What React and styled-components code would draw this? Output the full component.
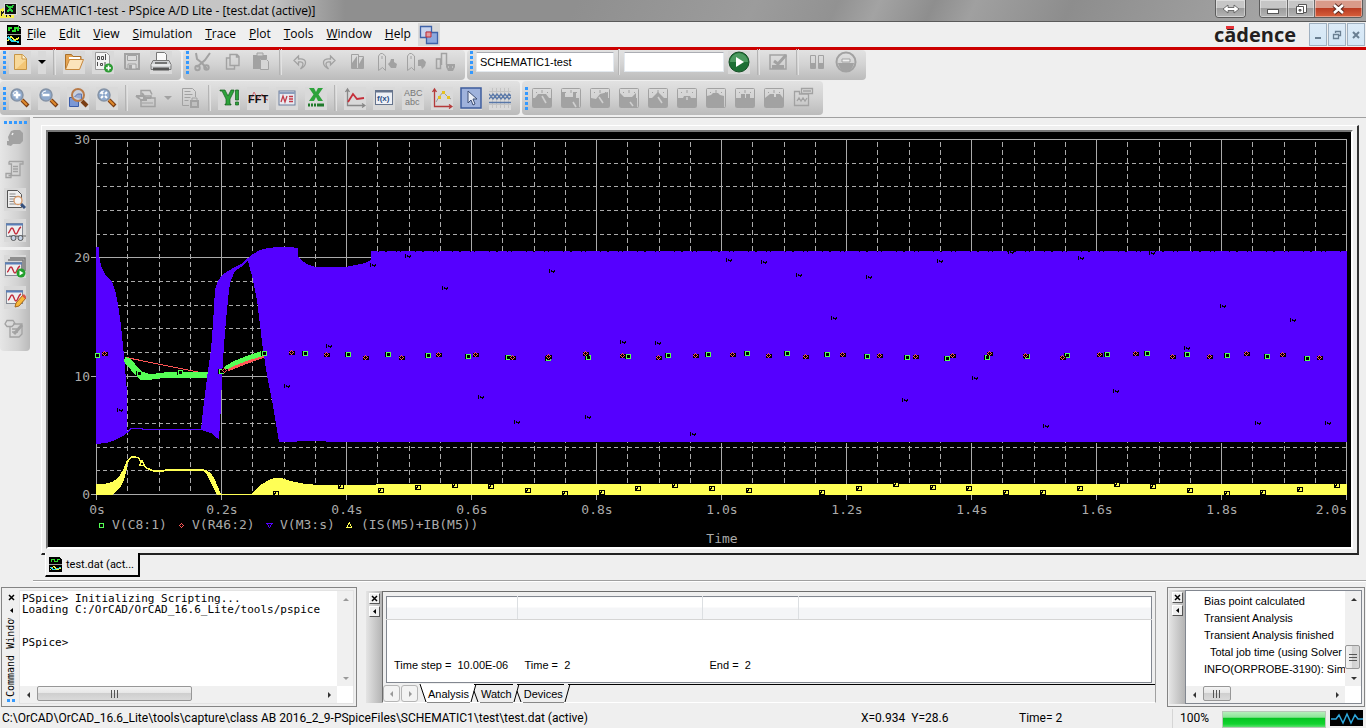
import styled, { createGlobalStyle } from 'styled-components';

const GlobalStyle = createGlobalStyle`
  * { box-sizing: border-box; }
  body { margin: 0; background: #efefef; }
  button, input, textarea { font: inherit; color: inherit; }
`;

const sans = '"Liberation Sans", Arial, sans-serif';
const ui = '"Open Sans", "Noto Sans", sans-serif';
const compact = 'Roboto, "Open Sans", sans-serif';
const mono = '"DejaVu Sans Mono", monospace';

const Page = styled.div`
  min-height: 100vh;
  display: flex;
  flex-direction: column;
  background: #efefef;
  color: #000;
  font-family: ${ui};
  font-size: 12px;
  overflow: hidden;
`;

/* ---------- title bar and menu ---------- */

const TitleBar = styled.header`
  height: 22px;
  display: flex;
  align-items: flex-start;
  padding-right: 3px;
  border-bottom: 1px solid #5a5a5a;
  background:
    linear-gradient(90deg, #c9c9c9 0, #c4c4c4 270px, rgba(160, 160, 160, 0) 345px),
    linear-gradient(115deg, #8f8f8f 0 42%, #9c9c9c 55%, #929292 61%, #a3a3a3 64%, #8e8e8e 68%, #a0a0a0 71%, #8d8d8d 78%, #a3a3a3 92%);
`;

const Title = styled.h1`
  flex: 1;
  margin: 0 0 0 4px;
  font-size: 12px;
  line-height: 21px;
  font-weight: 400;
  white-space: nowrap;
`;

const WindowButtons = styled.div`
  display: flex;
  height: 18px;
  margin-left: ${({ $gap }) => $gap || 0}px;
  border: 1px solid #5d5d5d;
  border-top: 0;
  border-radius: 0 0 4px 4px;
  overflow: hidden;
`;

const WindowButton = styled.button`
  width: ${({ $width }) => $width}px;
  padding: 0;
  border: 0;
  border-right: 1px solid #6a6a6a;
  display: flex;
  align-items: center;
  justify-content: center;
  box-shadow: inset 0 0 0 1px rgba(255, 255, 255, 0.4);
  background: ${({ $close }) =>
    $close
      ? 'linear-gradient(#d99a8a 0 45%, #b83a22 46%, #d8603c)'
      : 'linear-gradient(#c6c6c6 0 45%, #9b9b9b 46%, #b4b4b4)'};
  &:last-child { border-right: 0; }
`;

const MenuBar = styled.nav`
  height: 28px;
  display: flex;
  align-items: center;
  border-bottom: 3px solid #cc0000;
  padding: 0 1px 0 7px;
`;

const MenuItem = styled.button`
  padding: 0 7px 1px 6px;
  border: 0;
  background: none;
  line-height: 20px;
  &::first-letter { text-decoration: underline; }
`;

const IconButton = styled.button`
  width: 22px;
  height: 23px;
  padding: 0;
  border: 0;
  flex: none;
  display: flex;
  align-items: center;
  justify-content: center;
  background: ${({ $flat }) => ($flat ? 'transparent' : '#d9d9d9')};
`;

const NarrowButton = styled(IconButton)`
  width: 8px;
`;

const Brand = styled.span`
  margin-left: auto;
  margin-right: 13px;
  font-size: 20px;
  line-height: 22px;
  font-weight: 700;
  color: #231f20;
`;

const Macron = styled.span`
  position: relative;
  &::before {
    content: '';
    position: absolute;
    left: 2px;
    top: 5px;
    width: 8px;
    height: 3px;
    background: #e53238;
  }
`;

const ChildButtons = styled.div`
  display: flex;
  gap: 1px;
`;

const ChildButton = styled.button`
  width: 18px;
  height: 23px;
  padding: 0;
  display: flex;
  align-items: center;
  justify-content: center;
  border: 1px solid #9fb0c0;
  background: linear-gradient(#dcebf8, #d3e6f5);
`;

/* ---------- toolbars ---------- */

const ToolbarRow = styled.div`
  display: flex;
  gap: 2px;
  margin-bottom: 1px;
`;

const Group = styled.div`
  display: flex;
  align-items: center;
  gap: 3px;
  height: ${({ $tall }) => ($tall ? 34 : 30)}px;
  padding: 0 9px ${({ $tall }) => ($tall ? 0 : 6)}px 3px;
  border-radius: 4px;
  background: linear-gradient(#e2e2e2, #d2d2d2 50%, #bbbbbb);
`;

const Grip = styled.span`
  flex: none;
  width: 3px;
  height: 23px;
  background: repeating-linear-gradient(#3399ff 0 3px, transparent 3px 5px);
`;

const Tools = styled.div`
  display: flex;
  align-items: center;
  gap: ${({ $gap }) => $gap || 7}px;
`;

const Sep = styled.span`
  width: ${({ $thin }) => ($thin ? 2 : 3)}px;
  height: 26px;
  border-left: 1px solid #b4b4b4;
  border-right: 1px solid #e2e2e2;
`;

const Field = styled.input`
  width: ${({ $width }) => $width}px;
  height: 20px;
  padding: 0 3px;
  border: 1px solid #e3e9ef;
  border-top-color: #abadb3;
  background: #fff;
  font-family: ${sans};
  font-size: 11px;
`;

/* ---------- workspace ---------- */

const Workspace = styled.main`
  flex: 1;
  display: flex;
  align-items: flex-start;
  gap: 3px;
  padding-top: 1px;
`;

const SideBar = styled.aside`
  flex: none;
  width: 30px;
  height: 234px;
  display: flex;
  flex-direction: column;
  align-items: center;
  gap: 8px;
  padding-top: 4px;
  border-radius: 0 0 4px 4px;
  background: linear-gradient(90deg, #e6e6e6, #d2d2d2 60%, #bababa);
`;

const SideGrip = styled.span`
  flex: none;
  width: 23px;
  height: 3px;
  margin-bottom: -6px;
  background: repeating-linear-gradient(90deg, #3399ff 0 3px, transparent 3px 5px);
`;

const SideSep = styled.span`
  flex: none;
  width: 30px;
  height: 3px;
  margin: -3px 0;
  background: #efefef;
`;

const Document = styled.section`
  flex: 1;
  min-width: 0;
  border-top: 1px solid #a0a0a0;
  border-bottom: 1px solid #a0a0a0;
  box-shadow: 0 1px #fff;
  padding: 7px 7px 3px 8px;
`;

const Frame = styled.div`
  padding: 4px;
  border: solid;
  border-width: 1px 2px 2px 1px;
  border-color: #fff #333 #222 #fff;
`;

const PlotBox = styled.div`
  border: 2px solid;
  border-color: #777 #fff #fff #777;
  background: #000;
  svg { display: block; width: 100%; height: auto; }
`;

const DocTab = styled.button`
  position: relative;
  display: flex;
  align-items: center;
  gap: 4px;
  height: 24px;
  margin: -2px 0 0 4px;
  padding: 0 4px 0 3px;
  border: solid #000;
  border-width: 0 2px 2px 0;
  border-left: 1px solid #fff;
  background: #efefef;
  font-family: ${compact};
  font-size: 11px;
`;

/* ---------- bottom docks ---------- */

const Docks = styled.div`
  display: flex;
  align-items: center;
  gap: 9px;
  padding: 5px 1px 1px;
  height: 126px;
`;

const Dock = styled.section`
  display: flex;
  height: 120px;
  min-width: 0;
  flex: 0 1 ${({ $width }) => $width}px;
  border: 1px solid #848484;
  padding: 2px 2px 2px 1px;
`;

const Console = styled.div`
  flex: 1;
  min-width: 0;
  display: grid;
  grid-template-columns: 1fr 16px;
  grid-template-rows: 1fr 17px;
  border: 1px solid ${({ $dark }) => ($dark ? '#828790' : '#e3e3e3')};
  background: #fff;
`;

const ConsoleText = styled.textarea`
  width: 100%;
  height: 100%;
  padding: 2px 0 0 2px;
  border: 0;
  resize: none;
  overflow: hidden;
  white-space: pre;
  background: #fff;
  font-family: ${mono};
  font-size: 11px;
  line-height: 11px;
`;

const DockStrip = styled.div`
  flex: none;
  width: 16px;
  display: flex;
  flex-direction: column;
  align-items: center;
  gap: 2px;
  padding-top: 2px;
  background: ${({ $shaded }) => ($shaded ? 'linear-gradient(90deg, #e4e4e4, #b4b4b4)' : 'none')};
`;

const DockButton = styled.button`
  width: 11px;
  height: 11px;
  padding: 0;
  display: flex;
  align-items: center;
  justify-content: center;
  border: 1px solid;
  border-color: ${({ $plain }) => ($plain ? 'transparent' : '#fff #555 #555 #fff')};
  background: ${({ $plain }) => ($plain ? 'none' : '#efefef')};
`;

const StripTitle = styled.span`
  flex: 1;
  min-height: 0;
  overflow: hidden;
  writing-mode: vertical-rl;
  transform: rotate(180deg);
  font-family: ${mono};
  font-size: 10px;
  line-height: 14px;
  white-space: nowrap;
`;

const StripGrip = styled.span`
  width: 8px;
  height: 3px;
  margin-bottom: 2px;
  background: repeating-linear-gradient(90deg, #3399ff 0 3px, transparent 3px 5px);
`;

const ScrollBar = styled.div`
  display: flex;
  flex-direction: ${({ $vertical }) => ($vertical ? 'column' : 'row')};
  background: #f0f0f0;
`;

const ScrollEnd = styled.button`
  flex: none;
  width: 17px;
  height: 17px;
  padding: 0;
  border: 0;
  background: none;
  display: flex;
  align-items: center;
  justify-content: center;
`;

const Track = styled.div`
  flex: 1;
  display: flex;
  flex-direction: inherit;
  justify-content: ${({ $end }) => ($end ? 'flex-end' : 'flex-start')};
`;

const Thumb = styled.span`
  width: ${({ $vertical, $size }) => ($vertical ? '15px' : $size)};
  height: ${({ $vertical, $size }) => ($vertical ? $size : '15px')};
  display: flex;
  align-items: center;
  justify-content: center;
  border: 1px solid #979797;
  border-radius: 2px;
  background: linear-gradient(${({ $vertical }) => ($vertical ? '90deg' : '180deg')}, #f3f3f3, #e6e6e6 48%, #cfcfcf 50%, #dadada);
`;

const Analysis = styled.section`
  flex: 1;
  min-width: 0;
  height: 112px;
  margin-right: 2px;
  display: flex;
`;

const AnalysisBody = styled.div`
  flex: 1;
  min-width: 0;
  display: flex;
  flex-direction: column;
  border: 1px solid;
  border-color: #6d6d6d #a0a0a0 #fff #6d6d6d;
  padding: 4px 3px 0;
`;

const Grid = styled.table`
  width: 100%;
  table-layout: fixed;
  border-collapse: collapse;
  border: 1px solid #828790;
  background: #fff;
  font-family: ${sans};
  font-size: 11px;

  th {
    height: 23px;
    padding: 0;
    border-right: 1px solid #dcdfe2;
    border-bottom: 1px solid #d5d5d5;
    background: linear-gradient(#fff 45%, #f4f5f7 46%);
  }
  th:last-child { border-right: 0; }
  td {
    height: 63px;
    padding: 0 7px 11px;
    vertical-align: bottom;
    white-space: pre;
  }
`;

const SheetTabs = styled.div`
  display: flex;
  height: 19px;
  margin: 1px -3px 0;
  font-family: ${sans};
  font-size: 11px;
`;

const PageButton = styled.button`
  width: 17px;
  height: 17px;
  margin: 1px 1px 0 0;
  padding: 0;
  border: 1px solid #b5b5b5;
  border-radius: 3px;
  background: #f3f3f3;
  display: flex;
  align-items: center;
  justify-content: center;
`;

const SheetTab = styled.button`
  padding: 0 1px;
  border: 0;
  border-top: 1px solid ${({ $active }) => ($active ? '#fff' : '#000')};
  border-bottom: 1px solid #888;
  background: ${({ $active }) => ($active ? '#fff' : '#efefef')};
  line-height: 16px;
`;

const SheetRest = styled.span`
  flex: 1;
  border-top: 1px solid #000;
`;

const Log = styled.ul`
  margin: 0;
  padding: 2px 0 0 18px;
  overflow: hidden;
  list-style: none;
  font-family: ${sans};
  font-size: 11px;
  line-height: 17px;
  white-space: pre;
`;

/* ---------- status bar ---------- */

const StatusBar = styled.footer`
  height: 20px;
  display: grid;
  grid-template-columns: 1fr 158px 153px 48px 110px 33px;
  align-items: center;
  padding: 0 3px 0 2px;
  font-family: ${compact};
  line-height: 19px;
  white-space: pre;
`;

const StatusCell = styled.span`
  padding-left: 7px;
  border-left: 1px solid #d5d5d5;
`;

const Progress = styled.div`
  height: 17px;
  margin: 2px 4px 0 2px;
  border: 1px solid #b8c8b8;
  background: linear-gradient(#b5efbb, #8be596 35%, #05c522 42%, #12d32f 80%, #5ce06f);
`;

/* ---------- icons ---------- */

const G = '#a2a2a2';

const Svg = ({ w = 22, h = 22, children, ...rest }) => (
  <svg width={w} height={h} viewBox={`0 0 ${w} ${h}`} fill="none" aria-hidden="true" {...rest}>
    {children}
  </svg>
);

const Lens = ({ children }) => (
  <>
    <path d="M13 13l6 6" stroke="#7a3d12" strokeWidth="4" />
    <path d="M13 13l5 5" stroke="#e08a2c" strokeWidth="2" />
    <circle cx="8" cy="8" r="6" fill="#8fa9cc" stroke="#8593a6" strokeWidth="1.5" />
    <path d="M4 7a4 4 0 0 1 4-3" stroke="#fff" />
    {children}
  </>
);

const Wave = ({ children }) => (
  <>
    <rect x="2.5" y="3.5" width="16" height="13" fill="#eee" stroke="#848a94" />
    <path d="M2 4.5h17" stroke="#5a7fb8" strokeWidth="2" />
    <path d="M4 13c2 0 2-5 4-5s2 6 4 6 2-6 5-7" stroke="#c22a3a" strokeWidth="1.4" />
    {children}
  </>
);

const Meter = ({ top, needle }) => (
  <>
    <rect x="1.5" y="1.5" width="19" height="19" rx="1" stroke={G} />
    <path d={`M2 11${top}V20H2z`} fill={G} />
    <path d={needle} stroke="#d0d0d0" strokeWidth="1.6" />
    <path d="M11 3v3M5 5l1 1M17 5l-1 1" stroke={G} />
  </>
);

const icons = {
  fresh: (
    <>
      <path d="M5.500 3.500h8l4 4v11h-12z" fill="#f8d99a" stroke="#c79545" />
      <path d="M13 3.500v4.500h4.500" fill="#fff3d4" stroke="#c79545" />
      <path d="M7 18h10V9z" fill="#f3c676" />
    </>
  ),
  open: (
    <>
      <path d="M2.500 18V3.500h6l1.500 2h8V9" fill="#e6a552" stroke="#a86f2d" />
      <path d="M2.500 18.500L6.500 8.500h14l-4 10z" fill="#fbe3bb" stroke="#c7873b" />
      <path d="M6 7h11" stroke="#fff" strokeWidth="2" />
    </>
  ),
  addSim: (
    <>
      <path d="M3.500 1.500h11l3 3v14h-14z" fill="#f3f3f3" stroke="#999" />
      <path d="M5.500 5.500h2v3h-2zM9.500 5.500h2v3h-2zM13.500 3v6M5.500 11v4M8.500 12.500h2v2h-2zM13 11v4" stroke="#4c4c4c" />
      <circle cx="16.500" cy="17" r="4.500" fill="#2e9b35" />
      <path d="M16.500 14.500v5M14 17h5" stroke="#fff" strokeWidth="1.500" />
    </>
  ),
  save: (
    <>
      <path d="M4 3h14v15H5l-1-1z" stroke={G} strokeWidth="2" />
      <path d="M6.500 4.500h9v5h-9z" fill="#dcdcdc" stroke={G} />
      <path d="M7 13h8v5H7z" fill="#dcdcdc" stroke={G} />
      <path d="M8 14h3v4H8z" fill={G} />
    </>
  ),
  print: (
    <>
      <path d="M6.500 10V1.500h8l2 2V10" fill="#fafafa" stroke="#777" />
      <path d="M3 9.500h16l2 4v5H1v-5z" fill="#cfd1d3" stroke="#777" />
      <path d="M1.500 14h19" stroke="#fff" />
      <path d="M3 18h16" stroke="#555" strokeWidth="3" />
      <path d="M5 12h12" stroke="#555" strokeWidth="1.500" />
    </>
  ),
  cut: (
    <>
      <path d="M4 2l1 6 5 4 5 6M18 2l-5 7-8 7" stroke={G} strokeWidth="2" />
      <circle cx="5.500" cy="17" r="2.200" stroke={G} strokeWidth="2" />
      <circle cx="14.500" cy="16.500" r="2.200" stroke={G} strokeWidth="2" />
    </>
  ),
  copy: <path d="M9 3.500h7l2 2v9H9zM9 7H5.500v11h8v-3.500M15.500 3.500V6H18" stroke={G} strokeWidth="1.400" />,
  paste: (
    <>
      <path d="M3 4h14v4h-7v10H3z" fill={G} />
      <path d="M7 2h6v3H7z" stroke={G} fill="#d5d5d5" />
      <path d="M10.500 8.500h6l2 2v8h-8z" fill="#d5d5d5" stroke={G} />
    </>
  ),
  undo: <path d="M9.500 5L5 9.500 9.500 14v-3c5-1 6 2 2 7 7-4 7-11-2-10z" stroke={G} strokeWidth="1.300" />,
  redo: <path d="M12.500 5l4.500 4.500-4.500 4.500v-3c-5-1-6 2-2 7-7-4-7-11 2-10z" stroke={G} strokeWidth="1.300" />,
  book: (
    <>
      <path d="M4.500 3.500h7v14h-7zM11.500 5.500h5v12h-5z" stroke={G} />
      <path d="M5 12l5-7v12H5zM12 13l4-7v11h-4z" fill={G} />
    </>
  ),
  markNext: (
    <>
      <path d="M2.500 19.500V5l2-2.500h2L9.500 5v14.500l-3-3zM6 5v3" stroke={G} />
      <path d="M15 8h3v3l3 2-1 4h-5l-3-4 2-2z" fill={G} />
    </>
  ),
  markPrev: (
    <>
      <path d="M2.500 19.500V5l2-2.500h2L9.500 5v14.500l-3-3zM6 5v3" stroke={G} />
      <path d="M13 9l5-1 3 3-1 4-3 3-1-3h-3z" fill={G} />
    </>
  ),
  markClear: (
    <>
      <path d="M2.500 17.500V8h4v9.500zM7.500 14V2.500h5V14" stroke={G} strokeWidth="1.500" />
      <path d="M12 13h9v3l-2 4h-5l-2-4z" fill={G} />
      <path d="M14 16h1M18 16h1" stroke="#ddd" />
    </>
  ),
  run: (
    <>
      <circle cx="11" cy="11" r="10" fill="#1d6f35" stroke="#175026" />
      <path d="M2 11a9 9 0 0 1 18 0z" fill="#4c9a60" />
      <path d="M8 6l8 5-8 5z" fill="#fff" />
    </>
  ),
  edit: (
    <>
      <path d="M3 4h16v14H3z" stroke={G} strokeWidth="1.500" />
      <path d="M5 14h12v4H5z" fill={G} />
      <path d="M7 10l4 3 8-9" stroke={G} strokeWidth="3" />
    </>
  ),
  pause: (
    <>
      <path d="M4.500 4.500h5v13h-5zM12.500 4.500h5v13h-5z" stroke={G} />
      <path d="M5 12h4v5H5zM13 12h4v5h-4z" fill={G} />
    </>
  ),
  stop: (
    <>
      <circle cx="11" cy="11" r="9.500" stroke={G} strokeWidth="2" />
      <path d="M3 12h16c-1 5-4 8-8 8s-7-3-8-8z" fill={G} />
      <path d="M7 8h8v3H7z" stroke={G} fill="#eee" />
    </>
  ),
  zoomIn: <Lens><path d="M8 4.500v7M4.500 8h7" stroke="#fff" strokeWidth="2.500" /></Lens>,
  zoomOut: <Lens><path d="M4.500 8h7" stroke="#fff" strokeWidth="2.500" /></Lens>,
  zoomArea: (
    <>
      <path d="M2.500 10.500h9v9h-9z" fill="#7a98d6" stroke="#3a5ca8" />
      <path d="M15 14l5 5" stroke="#7a3d12" strokeWidth="4" />
      <circle cx="11" cy="8" r="6" fill="#c8cfdd" stroke="#b87a48" strokeWidth="2" />
      <path d="M7.500 10l3-3h4v5" fill="#98a9cf" stroke="#5b74af" />
    </>
  ),
  zoomFit: <Lens><path d="M5 5l2 2M11 5L9 7M5 11l2-2M11 11L9 9" stroke="#fff" strokeWidth="2" /></Lens>,
  axis: (
    <>
      <path d="M6 8V3.500h9l2 4M6 14v5.500h14V11h-4V9H10" stroke={G} strokeWidth="1.500" />
      <path d="M1 9h8L7 6M8 11h8M5 13h7M1 9l4 3" stroke={G} strokeWidth="2" />
      <path d="M7 16h11" stroke={G} />
    </>
  ),
  report: (
    <>
      <path d="M10 18.500H3.500V1.500h10l3 3V10M5.500 4.500h6M5.500 7.500h8M5.500 10.500h6M5.500 13.500h4" stroke={G} />
      <path d="M11 13h9v8h-9z" fill={G} />
      <path d="M13 13v-2h5v2" stroke={G} />
      <path d="M13 16h5M13 18h5" stroke="#ddd" />
    </>
  ),
  why: (
    <>
      <path d="M2 3h5l3 6 3-6h3v1l-4 8v5h1v1H7v-1h1v-5L4 4H2z" fill="#2da33b" stroke="#145e1e" strokeWidth=".7" />
      <path d="M17.500 3h3v10h-3zM17.500 15h3v3h-3z" fill="#2da33b" stroke="#145e1e" strokeWidth=".7" />
    </>
  ),
  fft: (
    <>
      <path d="M1 14l3-2 3-7 4 7 4-5 3 5 3 1" stroke="#d26a72" />
      <text x="1" y="16" fontSize="11" fontWeight="700" fill="#111" fontFamily="Liberation Sans, sans-serif">FFT</text>
    </>
  ),
  netlist: (
    <>
      <rect x="3" y="4" width="16" height="14" fill="#e9eaf0" stroke="#6c7f9e" />
      <path d="M3 6h16" stroke="#8b9dbb" strokeWidth="2" />
      <path d="M5 15l2-6 2 6 2-6M13 9.500h4M13 12h4M13 14.500h4" stroke="#c23a48" strokeWidth="1.300" />
    </>
  ),
  excel: (
    <>
      <path d="M4 1h5l2 4 2-4h5l-4.500 6.500L18 14h-5l-2-4-2 4H4l4.500-6.500z" fill="#2da33b" />
      <path d="M3 18h2M6 18h2M9 18h2M12 18h7" stroke="#1f7a2b" strokeWidth="3" />
    </>
  ),
  trace: (
    <>
      <path d="M3.500 2v16.500H21M1.500 5l2-3 2 3M18 16.500l3 2-3 2" stroke="#888" strokeWidth="1.300" />
      <path d="M4 15l5-8 4 5 7-1" stroke="#c52f3a" strokeWidth="1.800" />
    </>
  ),
  func: (
    <>
      <rect x="2.500" y="3.500" width="17" height="14" fill="#eef0f5" stroke="#66748c" />
      <path d="M3 4.500h16" stroke="#66748c" strokeWidth="2" />
      <text x="4" y="14" fontSize="8" fontWeight="700" fill="#2b4f88" fontFamily="Liberation Sans, sans-serif">f(x)</text>
    </>
  ),
  label: (
    <g fontSize="9" fill="#777" stroke="none" fontFamily="Liberation Sans, sans-serif">
      <text x="2" y="9">ABC</text>
      <text x="3" y="18">abc</text>
    </g>
  ),
  points: (
    <>
      <path d="M3.500 1.500v18H21M1.500 5l2-3 2 3M18 17.500l3 2-3 2" stroke="#b53a3a" strokeWidth="1.300" />
      <path d="M5 15l3-5 4-5 5 5 3 2" stroke="#999" />
      <path d="M7 9h3v3H7zM11 4h3v3h-3zM16 9h3v3h-3z" fill="#e6c11e" />
    </>
  ),
  cursor: (
    <>
      <rect x="1" y="1" width="20" height="20" fill="#9fb2dc" stroke="#3e5c9c" strokeWidth="1.500" />
      <path d="M8 4v12l3-3 2 5 2-1-2-5h4z" fill="#e9edf6" stroke="#3d4e74" />
    </>
  ),
  lattice: (
    <>
      <path d="M3.500 1v20M7.500 1v20M11.500 1v20M15.500 1v20M19.500 1v20M0 4.500h22M0 17.500h22" stroke="#c3c3c3" />
      <path d="M0 7l4 5 4-5 4 5 4-5 4 5 2-2M0 12l4-5 4 5 4-5 4 5 4-5 2 2M0 15.500h22" stroke="#5877a8" strokeWidth="1.300" />
    </>
  ),
  m1: <Meter top="h2l3-4h8l3 4h2" needle="M11 9l4 7" />,
  m2: <Meter top="V5h3v5h8V5h3v6h3" needle="M13 15l3 5" />,
  m3: <Meter top="l5 1 4-5 8-2v6h1" needle="M10 10l4 6" />,
  m4: <Meter top="V6l4 4h8l4-4v5h1" needle="M12 15l3 4" />,
  m5: <Meter top="h3l4-4 2-2 2 2 4 4h3" needle="M11 10l4 6" />,
  m6: <Meter top="h5l1-2h6l1 2h5" needle="M11 10v3" />,
  m7: <Meter top="V9l4-1 2-2h5l2 2 4 1v2" needle="M0 0" />,
  m8: <Meter top="h5V7h4v4h1V7h4v4h4" needle="M0 0" />,
  m9: <Meter top="l5-4h4v3h2V7h4l3 4" needle="M0 0" />,
  m10: (
    <path d="M2.500 7V4.500h5V7h9v11.500h-14zM9.500 1.500h11v5h-11zM11 4h8M5 14l2-3 2 3 2-3 2 3 2-3" stroke={G} strokeWidth="1.300" />
  ),
  blob: (
    <>
      <path d="M7 4l3-1h6l3 3v8l-3 3H9l-2 2-4-1v-4h2l-1-4z" fill={G} />
      <path d="M8 8l1-2" stroke="#eee" strokeWidth="1.500" />
    </>
  ),
  scroll: <path d="M5 3.500h14V6h-3v11.500H4.500M7.500 17V6H5V3.500M2 15.500h5v4H2zM9 8.500h5M9 11h5M9 13.500h5" stroke={G} strokeWidth="1.300" />,
  docFind: (
    <>
      <path d="M3.500 1.500h10l4 4v13h-14z" fill="#eee" stroke="#555" />
      <path d="M5.500 5h6M5.500 7.500h8M5.500 10h6M5.500 12.500h6M5.500 15h7" stroke="#888" />
      <path d="M17 15l4 4" stroke="#35507e" strokeWidth="3" />
      <circle cx="14" cy="11.500" r="4" fill="#f4f4f4" stroke="#d79a6a" strokeWidth="1.300" />
    </>
  ),
  waveView: (
    <Wave>
      <path d="M5 16h17" stroke="#666" />
      <circle cx="9.500" cy="18" r="2.500" fill="#c5d3e6" stroke="#555" />
      <circle cx="16.500" cy="18" r="2.500" fill="#c5d3e6" stroke="#555" />
    </Wave>
  ),
  waveRun: (
    <>
      <path d="M6 2h15v13M4 4h15v12" stroke="#777" strokeWidth="1.500" />
      <g transform="translate(-1 3)"><Wave /></g>
      <circle cx="17" cy="17" r="4.500" fill="#22a02c" />
      <path d="M15.500 14.500l4 2.500-4 2.500z" fill="#fff" />
    </>
  ),
  waveEdit: (
    <Wave>
      <path d="M11 20l1-4 7-8 3 3-7 8z" fill="#f8b93a" stroke="#a5661a" />
      <path d="M19 8l3 3" stroke="#d9554a" strokeWidth="2.500" />
    </Wave>
  ),
  notes: (
    <>
      <path d="M6 9v10h9l3-3V6H9M3 2.500h6l2 3-3 3H3L1 6zM8 11h5M8 14h6" stroke={G} strokeWidth="1.300" />
      <path d="M10 16l8-9" stroke={G} strokeWidth="3" />
    </>
  ),
};

const Tool = ({ name, label, flat }) => (
  <IconButton type="button" aria-label={label || name} $flat={flat}>
    <Svg>{icons[name]}</Svg>
  </IconButton>
);

const PlotFileIcon = () => (
  <Svg w={14} h={20} shapeRendering="crispEdges">
    <path d="M0 0h11l3 3v17H0z" fill="#000" />
    <path d="M11 0v3h3" stroke="#888" />
    <path d="M2 6V3h3M5 6h3V3h3v3" stroke="#2be02b" strokeWidth="1.500" />
    <path d="M0 9.500h14" stroke="#999" />
    <path d="M1 16l3-4 4 3 4-2" stroke="#f4f13a" strokeWidth="1.500" />
    <path d="M1 12l4 4 7 1" stroke="#2ad7e8" strokeWidth="1.500" />
  </Svg>
);

const arrows = {
  up: 'M1 5l3-3 3 3z',
  down: 'M1 3l3 3 3-3z',
  left: 'M5 1L2 4l3 3z',
  right: 'M3 1l3 3-3 3z',
};

const Arrow = ({ dir, color = '#333' }) => (
  <Svg w={8} h={8}><path d={arrows[dir]} fill={color} /></Svg>
);

/* ---------- plot ---------- */

const LEFT = 96;
const RIGHT = 1346;
const blue = '#5500ff';
const green = '#55ff55';
const red = '#ff5555';
const yellow = '#ffff55';
const ink = '#aaaaaa';

const minorY = [163, 186, 210, 234, 281, 305, 328, 352, 399, 423, 447, 470];
const majorY = [[139, '30'], [257, '20'], [376, '10'], [494, '0']];
const majorX = Array.from({ length: 11 }, (_, i) => LEFT + i * 125);
const minorX = majorX.slice(0, 10).flatMap((x) => [x + 31, x + 63, x + 94]);

const squares = [
  [97, 355], [139, 373], [180, 372], [221, 371], [264, 353], [305, 353], [348, 354], [388, 354],
  [428, 355], [468, 356], [508, 357], [548, 358], [588, 357], [628, 356], [668, 355], [708, 354],
  [747, 353], [787, 353], [827, 354], [867, 356], [907, 357], [947, 358], [987, 357], [1027, 356],
  [1067, 355], [1107, 354], [1147, 353], [1187, 354], [1227, 355], [1267, 356], [1307, 358],
];

const diamonds = [
  [104, 353], [224, 370], [291, 352], [326, 354], [365, 357], [401, 357], [438, 354], [475, 354],
  [512, 357], [548, 356], [585, 353], [622, 355], [658, 357], [695, 355], [732, 354], [768, 355],
  [805, 356], [842, 354], [879, 355], [915, 356], [952, 355], [989, 353], [1025, 355], [1062, 357],
  [1099, 354], [1135, 353], [1172, 356], [1209, 356], [1246, 353], [1282, 354], [1319, 357],
];

const blueMarks = [
  [120, 410], [329, 346], [287, 386], [481, 397], [373, 265], [408, 256], [445, 288], [552, 271],
  [623, 342], [658, 343], [517, 422], [588, 417], [693, 434], [729, 260], [764, 262], [799, 275],
  [834, 318], [869, 277], [940, 261], [1011, 252], [1081, 258], [1152, 253], [1223, 306],
  [1293, 320], [1187, 348], [975, 378], [905, 400], [1116, 391], [1046, 426], [1258, 423], [1328, 423],
];

const yellowMarks = [
  [276, 493], [341, 486], [381, 490], [418, 487], [455, 485], [491, 486], [528, 490], [565, 493],
  [602, 492], [638, 488], [675, 485], [712, 488], [749, 490], [822, 492], [859, 488], [896, 484],
  [933, 487], [969, 488], [1006, 492], [1043, 492], [1080, 488], [1117, 484], [1153, 486],
  [1190, 490], [1227, 493], [1263, 492], [1300, 489], [1337, 485],
];

const Square = ({ x, y }) => (
  <>
    <path d={`M${x - 3} ${y - 2}h6v5h-6z`} fill="#000" />
    <rect x={x - 1.5} y={y - 1.5} width="4" height="4" fill="#000" stroke={green} />
  </>
);

const Diamond = ({ x, y }) => (
  <>
    <rect x={x - 2} y={y - 1} width="6" height="4" fill="#000" />
    <path
      d={`M${x} ${y - 2}h1v1h-1zM${x - 1} ${y - 1}h1v1h-1zM${x + 1} ${y - 1}h1v1h-1zM${x - 2} ${y}h1v1h-1zM${x + 2} ${y}h1v1h-1zM${x - 1} ${y + 1}h1v1h-1zM${x + 1} ${y + 1}h1v1h-1zM${x} ${y + 2}h1v1h-1z`}
      fill={red}
    />
  </>
);

const Plot = () => (
  <svg viewBox="48 132 1303 415" role="img" aria-label="Transient plot" shapeRendering="crispEdges">
    <g stroke={ink}>
      {minorY.map((y) => (
        <path key={y} d={`M${LEFT} ${y + 0.5}H${RIGHT}`} strokeDasharray="4 3" />
      ))}
      {minorX.map((x) => (
        <path key={x} d={`M${x + 0.5} 142V494`} strokeDasharray="5 3" />
      ))}
      {majorY.map(([y]) => (
        <path key={y} d={`M91 ${y + 0.5}H${RIGHT}`} />
      ))}
      {majorX.map((x) => (
        <path key={x} d={`M${x + 0.5} 139V500`} />
      ))}
    </g>

    <g fill={red} stroke={red}>
      <path d="M126 357.500L208 374" fill="none" />
      <path d="M225 371L245 363 264 356" fill="none" strokeWidth="3" />
    </g>
    <path d="M125 357l4 1 6 6 6 7 8 3 13-1 4-1h42v6h-46l-14 2h-7l-5-4-5-6-7-8z" fill={green} />
    <path d="M224 367l10-6 15-6 13-4h2v5l-15 4-15 6-8 4z" fill={green} />

    <g fill={blue}>
      <path d="M96 247h3v8l2 11 4 8 7 8 3 8 3 14 3 22 3 30 3 36v41l-4 3-8 4-9 3-10 1z" />
      <path
        d="M201 430L203 410 207 378 211 350 213 323 215 290 217 283 221 276 228 271 235 267 241 264 248 258 253 254
           260 250 268 248 277 247H290L298 248V257L304 262 309 265 316 267H346L355 265 365 263 371 260V251H1347V442
           H346L306 441 288 442H279L277 430 272 400 267 375 263 350 257 300 253 280 248 261 241 267 235 271 231 280
           229 290 226 320 224 345 222 376 221 405 219 440 217 438 211 433z"
      />
    </g>
    <path d="M127 432.500l4-4h10l3 1h58" fill="none" stroke={blue} />
    <path d="M376 442.500H1346" stroke="#000" strokeDasharray="1 4" />
    <path d="M378 251.500H1346" stroke="#000" strokeDasharray="1 6 2 9 1 3 1 14" />

    <g fill={yellow}>
      <path d="M96 484h8l8-2 6-4 5-8 4-10v8l-3 12-4 8-8 7H96z" />
      <path d="M202 470h4l5 3 4 7 6 14v1h-4l-6-12-4-8z" />
      <path d="M251 495l8-9 8-5 7-3h7l9 3 15 3 15 1h56v-1h971v11z" />
      <path d="M218 494h36v1h-36z" />
    </g>
    <path
      d="M126.500 464l2-4 3-3h4l3 1 3 5 5 5 7 3h10l2-1h38"
      fill="none"
      stroke={yellow}
      strokeWidth="1.500"
    />

    {squares.map(([x, y]) => <Square key={x} x={x} y={y} />)}
    {diamonds.map(([x, y]) => <Diamond key={x} x={x} y={y} />)}
    {blueMarks.map(([x, y]) => (
      <path key={x} d={`M${x - 3} ${y - 2}h1v4h-1zM${x - 1} ${y - 1}h1v1h2v2h-1v-1h-2zM${x + 2} ${y - 1}h1v2h-1z`} fill="#000" />
    ))}
    {yellowMarks.map(([x, y]) => (
      <g key={x}>
        <path d={`M${x - 3} ${y - 2}h6v5h-6z`} fill="#000" />
        <path d={`M${x - 2} ${y - 1}h1v1h-1zM${x - 1} ${y + 1}h1v-2h1v3h-2zM${x + 1} ${y - 1}h1v3h-1z`} fill={yellow} />
      </g>
    ))}
    <path d="M142 460.500l2.500 5h-5z" fill="#000" stroke={yellow} />

    <g fill={ink} fontFamily={mono} fontSize="13">
      {majorY.map(([y, text]) => (
        <text key={y} x="90" y={y + 5} textAnchor="end">{text}</text>
      ))}
      {majorX.map((x, i) => (
        <text key={x} x={x + 1} y="514" textAnchor={i === 10 ? 'end' : 'middle'}>
          {i === 0 ? '0s' : `${(i * 0.2).toFixed(1)}s`}
        </text>
      ))}
      <text x="112" y="529">V(C8:1)</text>
      <text x="192" y="529">V(R46:2)</text>
      <text x="280" y="529">V(M3:s)</text>
      <text x="361" y="529">(IS(M5)+IB(M5))</text>
      <text x="722" y="543" textAnchor="middle">Time</text>
    </g>
    <Square x={101} y={525} />
    <Diamond x={181} y={525} />
    <path d="M267 523.500h5l-2.500 4z" fill="none" stroke={blue} />
    <path d="M349.500 522.500l2 5h-5z" fill="none" stroke={yellow} />
  </svg>
);

const menu = ['File', 'Edit', 'View', 'Simulation', 'Trace', 'Plot', 'Tools', 'Window', 'Help'];
const meters = ['m1', 'm2', 'm3', 'm4', 'm5', 'm6', 'm7', 'm8', 'm9', 'm10'];

const DockControls = ({ plain }) => (
  <>
    <DockButton type="button" aria-label="Close panel" $plain={plain}>
      <Svg w={7} h={7}><path d="M1 1l5 5M6 1L1 6" stroke="#000" strokeWidth="1.500" /></Svg>
    </DockButton>
    <DockButton type="button" aria-label="Collapse panel" $plain={plain}>
      <Svg w={7} h={7}><path d="M5 1v5L2 3.500z" fill="#000" /></Svg>
    </DockButton>
  </>
);

const Bar = ({ vertical, size, end }) => (
  <ScrollBar $vertical={vertical}>
    <ScrollEnd type="button" aria-label={vertical ? 'Scroll up' : 'Scroll left'}>
      <Arrow dir={vertical ? 'up' : 'left'} color={size ? '#333' : '#999'} />
    </ScrollEnd>
    <Track $end={end}>
      {size && (
        <Thumb $vertical={vertical} $size={size}>
          <Svg w={8} h={8}>
            <path d={vertical ? 'M0 1.500h8M0 4.500h8M0 7.500h8' : 'M.5 0v8M3.500 0v8M6.500 0v8'} stroke="#555" />
          </Svg>
        </Thumb>
      )}
    </Track>
    <ScrollEnd type="button" aria-label={vertical ? 'Scroll down' : 'Scroll right'}>
      <Arrow dir={vertical ? 'down' : 'right'} color={size ? '#333' : '#999'} />
    </ScrollEnd>
  </ScrollBar>
);

const Slash = ({ left, right, cross }) => (
  <Svg w={right ? 8 : 10} h={19}>
    <path d="M0 0h10v18H0z" fill="#efefef" />
    {left && <path d="M0 0h6L1 18H0z" fill="#fff" />}
    {right && <path d="M1 0h7v18z" fill="#fff" />}
    {!right && <path d="M4 .5h6" stroke="#000" />}
    {right ? <path d="M1 0l6 18" stroke="#000" /> : <path d="M6 0L1 18" stroke="#000" />}
    {cross && <path d="M4 7l4 11" stroke="#000" />}
  </Svg>
);

export default function App() {
  return (
    <Page>
      <GlobalStyle />
      <TitleBar>
        <Svg w={17} h={19} shapeRendering="crispEdges">
          <path d="M0 9l3-1 3 2 3-1 5 2v7H0z" fill="#f7ef4a" />
          <path d="M1 11v5M4 11l-2 3M6 12v5M9 14l2 3" stroke="#222" />
          <path d="M4 3h12v11H4z" fill="#111" stroke="#ddd" />
          <path d="M7 5l3 4-3 3M13 5l-3 4 3 3M8 7h5" stroke="#25cf3a" strokeWidth="1.500" />
        </Svg>
        <Title>SCHEMATIC1-test - PSpice A/D Lite - [test.dat (active)]</Title>
        <WindowButtons>
          <WindowButton type="button" aria-label="Switch display" $width={29}>
            <Svg w={18} h={10}>
              <path d="M1 5l5-4v2.500h6V1l5 4-5 4V6.500H6V9z" fill="#fff" stroke="#555" strokeWidth=".8" />
            </Svg>
          </WindowButton>
        </WindowButtons>
        <WindowButtons $gap={13}>
          <WindowButton type="button" aria-label="Minimize" $width={28}>
            <Svg w={13} h={12}><rect x=".5" y="6.500" width="11" height="4" fill="#fff" stroke="#555" /></Svg>
          </WindowButton>
          <WindowButton type="button" aria-label="Restore" $width={27}>
            <Svg w={13} h={12}>
              <path d="M3.500 1.500h8v8h-8z" fill="#fff" stroke="#555" />
              <path d="M1.500 3.500h7v7h-7z" fill="#fff" stroke="#555" />
              <path d="M4 6.500h2v1.500H4z" fill="#888" stroke="#555" />
            </Svg>
          </WindowButton>
          <WindowButton type="button" aria-label="Close" $width={47} $close>
            <Svg w={13} h={12}>
              <path d="M2 2l9 8M11 2l-9 8" stroke="#5b2a22" strokeWidth="4.500" />
              <path d="M2 2l9 8M11 2l-9 8" stroke="#fff" strokeWidth="2.500" />
            </Svg>
          </WindowButton>
        </WindowButtons>
      </TitleBar>

      <MenuBar>
        <PlotFileIcon />
        {menu.map((item) => <MenuItem key={item} type="button">{item}</MenuItem>)}
        <IconButton type="button" aria-label="Swap windows">
          <Svg>
            <path d="M2.500 2.500h11v11h-11z" fill="#c9d5ef" stroke="#3f62a8" strokeWidth="1.300" />
            <path d="M8.500 8.500h11v11h-11z" fill="#8da9de" stroke="#3f62a8" strokeWidth="1.300" />
            <path d="M8 8h5v5H8z" fill="#e29a9e" stroke="#c02f38" />
          </Svg>
        </IconButton>
        <Brand>c<Macron>ā</Macron>dence</Brand>
        <ChildButtons>
          <ChildButton type="button" aria-label="Minimize document">
            <Svg w={10} h={10}><path d="M2 8h6" stroke="#6a7f92" strokeWidth="2" /></Svg>
          </ChildButton>
          <ChildButton type="button" aria-label="Restore document">
            <Svg w={10} h={10}><path d="M3.500 3V1.500h5v4H7M1.500 4.500h5v4h-5zM1 4.500h6M3 1.500h6" stroke="#6a7f92" strokeWidth="1.300" /></Svg>
          </ChildButton>
          <ChildButton type="button" aria-label="Close document">
            <Svg w={10} h={10}><path d="M2 2l6 6M8 2L2 8" stroke="#6a7f92" strokeWidth="2" /></Svg>
          </ChildButton>
        </ChildButtons>
      </MenuBar>

      <ToolbarRow>
        <Group>
          <Grip />
          <Tools>
            <Tool name="fresh" label="New" />
            <NarrowButton type="button" aria-label="New options">
              <Svg w={8} h={6}><path d="M0 1h8L4 5z" fill="#000" /></Svg>
            </NarrowButton>
            <Sep />
            <Tool name="open" label="Open" />
            <Tool name="addSim" label="Append file" />
            <Tool name="save" label="Save" flat />
            <Tool name="print" label="Print" />
          </Tools>
        </Group>
        <Group>
          <Grip />
          <Tools>
            <Tool name="cut" flat />
            <Tool name="copy" flat />
            <Tool name="paste" flat />
            <Sep />
            <Tool name="undo" flat />
            <Tool name="redo" flat />
            <Tool name="book" label="Toggle bookmark" flat />
            <Tool name="markNext" label="Next bookmark" flat />
            <Tool name="markPrev" label="Previous bookmark" flat />
            <Tool name="markClear" label="Clear bookmarks" flat />
          </Tools>
        </Group>
        <Group>
          <Grip />
          <Tools>
            <Tools $gap={4}>
              <Field $width={138} aria-label="Simulation profile" defaultValue="SCHEMATIC1-test" />
              <Sep $thin />
              <Field $width={100} aria-label="Run to time" />
              <Tool name="run" label="Run" />
            </Tools>
            <Sep />
            <Tool name="edit" label="Edit profile" flat />
            <Sep />
            <Tool name="pause" flat />
            <Tool name="stop" flat />
          </Tools>
        </Group>
      </ToolbarRow>

      <ToolbarRow>
        <Group $tall>
          <Grip />
          <Tools>
            <Tool name="zoomIn" label="Zoom in" />
            <Tool name="zoomOut" label="Zoom out" />
            <Tool name="zoomArea" label="Zoom area" />
            <Tool name="zoomFit" label="Zoom fit" />
            <Sep />
            <Tool name="axis" label="Axis" flat />
            <NarrowButton type="button" aria-label="Axis options" $flat>
              <Svg w={8} h={6}><path d="M0 1h8L4 5z" fill={G} /></Svg>
            </NarrowButton>
            <Tool name="report" flat />
            <Sep />
            <Tool name="why" label="Evaluate measurement" />
            <Tool name="fft" label="Fourier" />
            <Tool name="netlist" label="Performance analysis" />
            <Tool name="excel" label="Log axis" />
            <Sep />
            <Tool name="trace" label="Add trace" />
            <Tool name="func" label="Measurement function" />
            <Tool name="label" label="Text label" />
            <Tool name="points" label="Mark data points" />
            <Tool name="cursor" label="Toggle cursor" />
            <Tool name="lattice" label="Cursor grid" />
          </Tools>
        </Group>
        <Group $tall>
          <Grip />
          <Tools>
            {meters.map((name, i) => <Tool key={name} name={name} label={`Cursor ${i + 1}`} flat />)}
          </Tools>
        </Group>
      </ToolbarRow>

      <Workspace>
        <SideBar>
          <SideGrip />
          <Tool name="blob" label="Simulation status" flat />
          <Tool name="scroll" label="Output file" flat />
          <Tool name="docFind" label="View results" />
          <Tool name="waveView" label="View waveform" />
          <SideSep />
          <Tool name="waveRun" label="Simulation queue" />
          <Tool name="waveEdit" label="Edit waveform" />
          <Tool name="notes" flat />
        </SideBar>
        <Document>
          <Frame>
            <PlotBox><Plot /></PlotBox>
          </Frame>
          <DocTab type="button">
            <Svg w={13} h={15} shapeRendering="crispEdges">
              <path d="M0 0h10l3 3v12H0z" fill="#000" />
              <path d="M2 5V2h3v2h3V2h3" stroke="#2be02b" />
              <path d="M0 7.500h13" stroke="#999" />
              <path d="M1 13l4-4 3 4 4-2" stroke="#f4f13a" />
              <path d="M1 10l4 3 7-3" stroke="#2ad7e8" />
            </Svg>
            test.dat (act...
          </DocTab>
        </Document>
      </Workspace>

      <Docks>
        <Dock $width={356}>
          <DockStrip>
            <DockControls plain />
            <StripTitle>Command Window</StripTitle>
            <StripGrip />
          </DockStrip>
          <Console>
            <ConsoleText
              aria-label="Command Window"
              readOnly
              wrap="off"
              value={'PSpice> Initializing Scripting...\nLoading C:/OrCAD/OrCAD_16.6_Lite/tools/pspice\n\n\nPSpice>'}
            />
            <Bar vertical />
            <Bar size="155px" />
          </Console>
        </Dock>

        <Analysis>
          <DockStrip $shaded><DockControls /></DockStrip>
          <AnalysisBody>
            <Grid>
              <colgroup>
                <col style={{ width: 131 }} />
                <col style={{ width: 185 }} />
                <col style={{ width: 96 }} />
                <col />
              </colgroup>
              <thead>
                <tr><th scope="col" /><th scope="col" /><th scope="col" /><th scope="col" /></tr>
              </thead>
              <tbody>
                <tr>
                  <td>Time step =  10.00E-06</td>
                  <td>Time =  2</td>
                  <td>End =  2</td>
                  <td />
                </tr>
              </tbody>
            </Grid>
            <SheetTabs>
              <PageButton type="button" aria-label="Previous tabs"><Arrow dir="left" color="#999" /></PageButton>
              <PageButton type="button" aria-label="Next tabs"><Arrow dir="right" color="#999" /></PageButton>
              <Slash right />
              <SheetTab type="button" $active>Analysis</SheetTab>
              <Slash left cross />
              <SheetTab type="button">Watch</SheetTab>
              <Slash cross />
              <SheetTab type="button">Devices</SheetTab>
              <Slash />
              <SheetRest />
            </SheetTabs>
          </AnalysisBody>
        </Analysis>

        <Dock $width={198}>
          <DockStrip $shaded><DockControls /></DockStrip>
          <Console $dark>
            <Log>
              <li>Bias point calculated</li>
              <li>Transient Analysis</li>
              <li>Transient Analysis finished</li>
              <li>{'  Total job time (using Solver 1)'}</li>
              <li>INFO(ORPROBE-3190): Simulation</li>
            </Log>
            <Bar vertical size="24px" end />
            <Bar size="28px" />
          </Console>
        </Dock>
      </Docks>

      <StatusBar>
        <span>C:\OrCAD\OrCAD_16.6_Lite\tools\capture\class AB 2016_2_9-PSpiceFiles\SCHEMATIC1\test\test.dat (active)</span>
        <span>X=0.934  Y=28.6</span>
        <span>Time= 2</span>
        <StatusCell>100%</StatusCell>
        <StatusCell as={Progress} role="progressbar" aria-valuenow={100} aria-label="Simulation progress" />
        <Svg w={33} h={16}>
          <path d="M0 0h33v16H0z" fill="#000" />
          <path d="M1 9h5l3-4 4 8 4-9 4 9 4-8 3 4h5" stroke="#2fa8dc" strokeWidth="1.500" />
        </Svg>
      </StatusBar>
    </Page>
  );
}
